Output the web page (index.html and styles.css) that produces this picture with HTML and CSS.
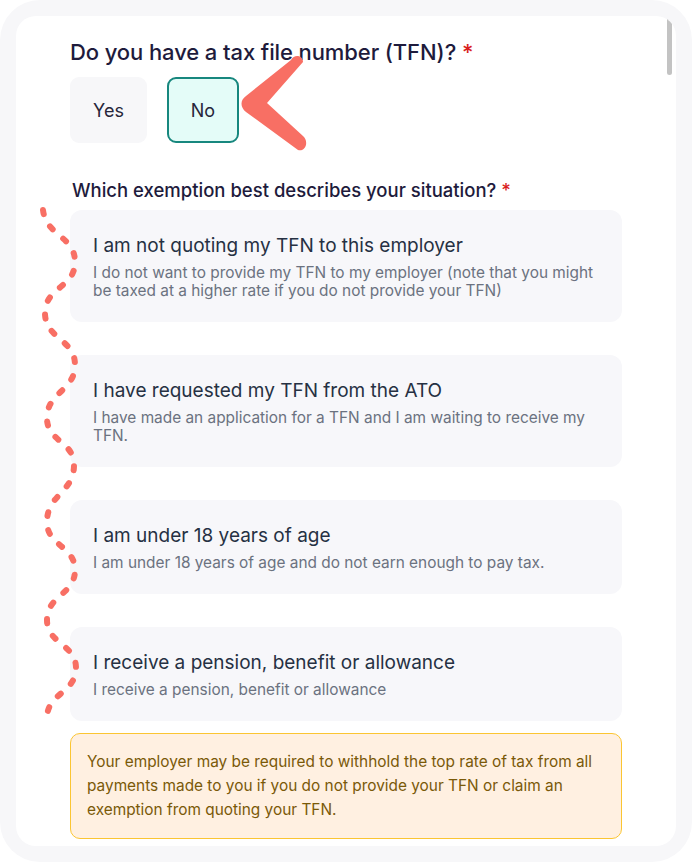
FILE: index.html
```html
<!DOCTYPE html>
<html lang="en">
<head>
<meta charset="utf-8">
<title>TFN</title>
<link rel="stylesheet" href="styles.css">
</head>
<body>
<div class="frame">
  <div class="panel">
    <div class="content">
      <h2 class="question">Do you have a tax file number (TFN)? <span class="req">*</span></h2>
      <div class="choices">
        <button class="choice">Yes</button>
        <button class="choice selected">No</button>
      </div>
      <h3 class="question-sm">Which exemption best describes your situation? <span class="req">*</span></h3>
      <div class="options">
        <div class="option">
          <div class="option-title">I am not quoting my TFN to this employer</div>
          <div class="option-desc">I do not want to provide my TFN to my employer (note that you might be taxed at a higher rate if you do not provide your TFN)</div>
        </div>
        <div class="option">
          <div class="option-title">I have requested my TFN from the ATO</div>
          <div class="option-desc">I have made an application for a TFN and I am waiting to receive my TFN.</div>
        </div>
        <div class="option">
          <div class="option-title">I am under 18 years of age</div>
          <div class="option-desc">I am under 18 years of age and do not earn enough to pay tax.</div>
        </div>
        <div class="option">
          <div class="option-title">I receive a pension, benefit or allowance</div>
          <div class="option-desc">I receive a pension, benefit or allowance</div>
        </div>
      </div>
      <div class="warning">Your employer may be required to withhold the top rate of tax from all payments made to you if you do not provide your TFN or claim an exemption from quoting your TFN.</div>
    </div>
    <div class="scroll-thumb"></div>
  </div>
  <svg class="annotations" width="692" height="862" viewBox="0 0 692 862" aria-hidden="true">
    <path class="arrow" d="M291,60 C294,54 303,55 303,62 L267,103 L303,136 C309,141 306,152 298,150 L246,112 C240,107 240,100 246,96 Z"/>
    <path class="dots" d="M43,210 C46,236 75,236 75,262 C75,288 45,287 45,313 C45,339 75,339 75,365 C75,391 47,392 47,418 C47,442 74,441 74,465 C74,493 47,494 47,522 C47,546 75,546 75,570 C75,595 47,595 47,620 C47,644 76,644 76,668 C76,693 47,693 47,718"/>
  </svg>
</div>
</body>
</html>
```

FILE: styles.css
```css
* { box-sizing: border-box; }
html, body { margin: 0; padding: 0; background: #ffffff; }
body { font-family: Inter, "Noto Sans", sans-serif; }

.frame {
  position: relative;
  width: 692px;
  height: 862px;
  background: #f7f7f9;
  border-radius: 40px;
  padding: 16px;
}

.panel {
  position: relative;
  height: 830px;
  background: #ffffff;
  border-radius: 20px;
  overflow: hidden;
}

.content {
  padding: 22px 54px 0 54px;
}

.question {
  margin: 0;
  font-size: 22px;
  line-height: 28px;
  font-weight: 500;
  color: #1e1b3c;
  letter-spacing: -0.1px;
}

.req { color: #d91e1e; }

.choices {
  display: flex;
  gap: 20px;
  margin-top: 11px;
}

.choice {
  height: 66px;
  width: 77px;
  border: none;
  border-radius: 9px;
  background: #f7f7f9;
  font-family: inherit;
  font-size: 18px;
  color: #27263a;
  padding: 0;
}

.choice.selected {
  width: 72px;
  background: #e4fcf8;
  border: 2.5px solid #17877e;
}

.question-sm {
  margin: 35px 0 0 2px;
  font-size: 18.5px;
  line-height: 24px;
  font-weight: 500;
  color: #1e1b3c;
}

.options {
  display: flex;
  flex-direction: column;
  gap: 33px;
  margin-top: 8px;
}

.option {
  background: #f7f7fa;
  border-radius: 12px;
  padding: 23px 22px 22px 23px;
}

.option-title {
  font-size: 19px;
  line-height: 26px;
  color: #263143;
}

.option-desc {
  margin-top: 5px;
  font-size: 15.4px;
  line-height: 18px;
  color: #6b7280;
}

.warning {
  margin-top: 12px;
  background: #fff0e1;
  border: 1.5px solid #fbc532;
  border-radius: 10px;
  padding: 16px;
  font-size: 15.4px;
  line-height: 24px;
  color: #7a5908;
}

.scroll-thumb {
  position: absolute;
  top: 1px;
  right: 4px;
  width: 5px;
  height: 58px;
  border-radius: 3px;
  background: #c3c3c3;
}

.annotations {
  position: absolute;
  left: 0;
  top: 0;
  pointer-events: none;
}

.arrow { fill: #f86f64; }

.dots {
  fill: none;
  stroke: #f86f64;
  stroke-width: 6;
  stroke-linecap: round;
  stroke-dasharray: 4 14;
}
```
